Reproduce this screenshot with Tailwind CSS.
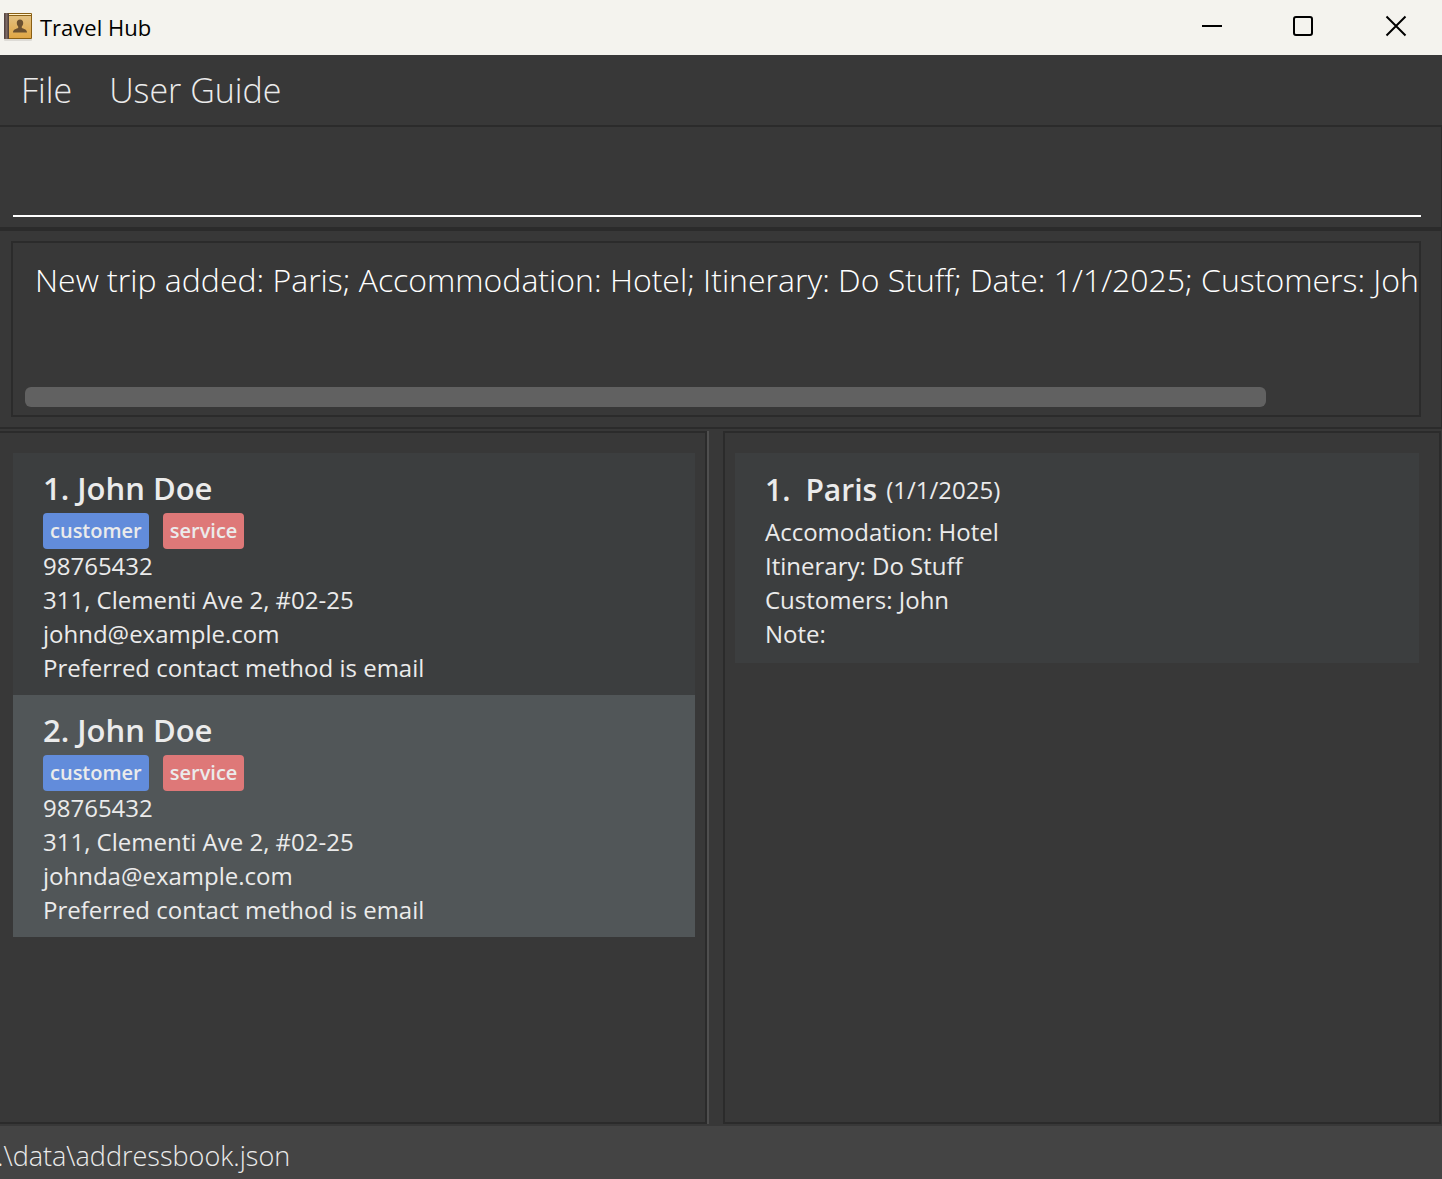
<!DOCTYPE html>
<html lang="en">
<head>
<meta charset="utf-8">
<meta name="viewport" content="width=device-width, initial-scale=1">
<title>Travel Hub</title>
<script src="https://cdn.jsdelivr.net/npm/@tailwindcss/browser@4"></script>
</head>
<body class="flex h-screen flex-col overflow-hidden bg-[#383838] font-['Open_Sans',sans-serif] text-[#ebebeb]">

<header class="flex h-[55px] shrink-0 items-center bg-[#f4f3ee] pb-[2px] pl-1 text-black">
  <svg class="h-[30px] w-[28px] shrink-0" viewBox="0 0 28 30" aria-hidden="true">
    <defs>
      <linearGradient id="cover" x1="0" y1="0" x2="0" y2="1"><stop offset="0" stop-color="#e2c080"/><stop offset="1" stop-color="#e0a644"/></linearGradient>
      <linearGradient id="spine" x1="0" y1="0" x2="1" y2="0"><stop offset="0" stop-color="#4a3c3a"/><stop offset=".5" stop-color="#7d6a66"/><stop offset="1" stop-color="#4a3a30"/></linearGradient>
    </defs>
    <rect x="0" y="26" width="28" height="3" rx="1" fill="#dddbd6"/>
    <rect x="0" y="1" width="28" height="26" rx="1" fill="#8a5f14"/>
    <rect x="4" y="2" width="23" height="1" fill="#fff3cf"/>
    <rect x="5" y="4" width="22" height="22" fill="url(#cover)"/>
    <rect x="0" y="1" width="5" height="26" rx="1" fill="url(#spine)"/>
    <path d="M16 7.500c2 0 3.200 1.300 3.200 3.200 0 1.700-.6 2.900-1.400 3.700v1.600c1.500 1 5.200.9 5.200 4.500H9c0-3.600 3.700-3.500 5.200-4.500v-1.600c-.8-.8-1.400-2-1.400-3.700 0-1.900 1.200-3.200 3.200-3.200z" fill="#6a5030"/>
  </svg>
  <h1 class="ml-2 text-[22px] leading-7">Travel Hub</h1>
  <div class="ml-auto flex h-full">
    <button type="button" aria-label="Minimize" class="flex w-[92px] items-center justify-center">
      <svg class="size-6" viewBox="0 0 24 24" fill="none" stroke="#000" stroke-width="2"><path d="M2 11h20"/></svg>
    </button>
    <button type="button" aria-label="Maximize" class="flex w-[90px] items-center justify-center">
      <svg class="size-6" viewBox="0 0 24 24" fill="none" stroke="#000" stroke-width="2"><rect x="3" y="2" width="18" height="18" rx="2"/></svg>
    </button>
    <button type="button" aria-label="Close" class="flex w-[94px] items-center justify-center">
      <svg class="size-6" viewBox="0 0 24 24" fill="none" stroke="#000" stroke-width="2"><path d="M3.500 1.500l19 19M22.500 1.500l-19 19"/></svg>
    </button>
  </div>
</header>

<nav class="flex h-[72px] shrink-0 items-center gap-[37px] border-b-2 border-[#2b2b2b] pl-[21px] text-[34px] font-light">
  <button type="button">File</button>
  <button type="button">User Guide</button>
</nav>

<section class="shrink-0 border-r border-b-4 border-[#2b2b2b] pr-5 pb-[10px] pl-[13px]">
  <input type="text" aria-label="Command" class="block h-[90px] w-full border-b-2 border-white bg-transparent px-6 text-[32px] font-light text-white outline-none">
</section>

<section class="shrink-0 border-r border-b-2 border-[#2b2b2b] pt-[10px] pr-5 pb-[10px] pl-[11px]">
  <div class="flex h-[176px] flex-col border-2 border-[#2b2b2b] pb-2 pl-3">
    <textarea readonly wrap="off" aria-label="Result" class="mr-[2px] min-h-0 flex-1 resize-none overflow-hidden bg-transparent pt-2 pl-[10px] text-[32px] leading-[58px] font-light whitespace-pre text-white outline-none">New trip added: Paris; Accommodation: Hotel; Itinerary: Do Stuff; Date: 1/1/2025; Customers: John; Note:</textarea>
    <div class="h-5 w-[89%] shrink-0 rounded-md bg-[#616161]"></div>
  </div>
</section>

<main class="flex min-h-0 flex-1 pt-[2px] pr-px pb-[2px] text-[24px] leading-[34px]">
  <section aria-label="Persons" class="min-w-0 flex-[682] border-y-2 border-r-2 border-[#2b2b2b] pt-5 pr-[10px] pl-[13px]">
    <ul>
      <li class="h-[242px] bg-[#3c3e3f] pt-[10px] pl-[30px]">
        <h2 class="text-[31px] leading-[50px] font-semibold">1. John Doe</h2>
        <div class="flex gap-[14px] text-[20px] leading-9 font-semibold">
          <span class="rounded bg-[#628cdb] px-[7px]">customer</span>
          <span class="rounded bg-[#de7878] px-[7px]">service</span>
        </div>
        <p>98765432</p>
        <p>311, Clementi Ave 2, #02-25</p>
        <p>johnd@example.com</p>
        <p>Preferred contact method is email</p>
      </li>
      <li class="h-[242px] bg-[#515658] pt-[10px] pl-[30px]">
        <h2 class="text-[31px] leading-[50px] font-semibold">2. John Doe</h2>
        <div class="flex gap-[14px] text-[20px] leading-9 font-semibold">
          <span class="rounded bg-[#628cdb] px-[7px]">customer</span>
          <span class="rounded bg-[#de7878] px-[7px]">service</span>
        </div>
        <p>98765432</p>
        <p>311, Clementi Ave 2, #02-25</p>
        <p>johnda@example.com</p>
        <p>Preferred contact method is email</p>
      </li>
    </ul>
  </section>
  <div role="separator" class="w-4 shrink-0 border-l-2 border-[#4f4f4f]"></div>
  <section aria-label="Trips" class="min-w-0 flex-[694] border-2 border-[#2b2b2b] px-[10px] pt-5">
    <ul class="mr-[10px]">
      <li class="h-[210px] bg-[#3c3e3f] pt-3 pl-[30px]">
        <h2 class="flex items-center gap-x-[9px] leading-[50px]">
          <span class="mr-[6px] text-[30px] font-semibold">1.</span>
          <span class="text-[30px] font-semibold">Paris</span>
          <span>(1/1/2025)</span>
        </h2>
        <p>Accomodation: Hotel</p>
        <p>Itinerary: Do Stuff</p>
        <p>Customers: John</p>
        <p>Note:</p>
      </li>
    </ul>
  </section>
</main>

<footer class="flex h-[53px] shrink-0 items-center bg-[#444444] pt-2 text-[27px] font-light">
  <p class="-ml-[3px]">.\data\addressbook.json</p>
</footer>
</body>
</html>
